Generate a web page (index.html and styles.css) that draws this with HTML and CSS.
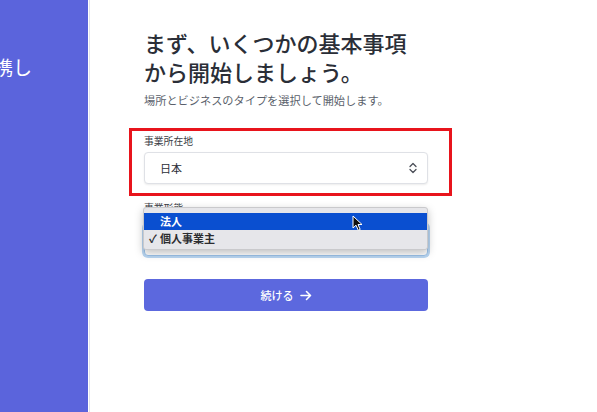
FILE: index.html
```html
<!DOCTYPE html>
<html lang="ja">
<head>
<meta charset="utf-8">
<link rel="stylesheet" href="styles.css">
</head>
<body>
<div class="page">
  <aside class="sidebar">
    <div class="side-text"><span>プラットフォームと連携し</span></div>
  </aside>
  <main class="main">
    <h1 class="title">まず、いくつかの基本事項<br>から開始しましょう。</h1>
    <p class="sub">場所とビジネスのタイプを選択して開始します。</p>

    <div class="field field-country">
      <div class="label">事業所在地</div>
      <div class="select">
        <span class="select-value">日本</span>
        <svg class="chev" width="10" height="14" viewBox="0 0 10 14"><path d="M2 5.5 L5 2.5 L8 5.5 M2 8.5 L5 11.5 L8 8.5" fill="none" stroke="#4b4f58" stroke-width="1.3" stroke-linecap="round" stroke-linejoin="round"/></svg>
      </div>
    </div>

    <div class="field field-type">
      <div class="label">事業形態</div>
      <div class="select select-focus"></div>
      <div class="menu">
        <div class="menu-row menu-row-active">法人</div>
        <div class="menu-row"><span class="check">✓</span>個人事業主</div>
      </div>
      <svg class="cursor" width="12" height="17" viewBox="0 0 12 17"><path d="M1 1 L1 13 L4 10.2 L6.3 15.3 L8.2 14.4 L6 9.5 L10 9.5 Z" fill="#111" stroke="#fff" stroke-width="1"/></svg>
    </div>

    <button class="btn">続ける <svg width="12" height="11" viewBox="0 0 12 11"><path d="M1 5.5 H10.5 M6.5 1.5 L10.5 5.5 L6.5 9.5" fill="none" stroke="#fff" stroke-width="1.6" stroke-linecap="round" stroke-linejoin="round"/></svg></button>
  </main>
</div>
</body>
</html>
```
FILE: styles.css
```css
* { box-sizing: border-box; }
html, body { margin: 0; padding: 0; background: #fff; }
body {
  font-family: "Noto Sans CJK JP", "Noto Sans", sans-serif;
  color: #2a2e37;
  width: 597px;
  height: 412px;
  overflow: hidden;
}
.page { display: flex; height: 412px; }
.sidebar {
  width: 89px;
  flex: 0 0 89px;
  background: #5b64dc;
  overflow: hidden;
  border-right: 1px solid #fff;
  box-shadow: 1px 0 0 #e2e4ea;
  padding-top: 54px;
}
.side-text {
  width: 32px;
  display: flex;
  justify-content: flex-end;
  white-space: nowrap;
  color: #fff;
  font-size: 19px;
  line-height: 26px;
}
.main {
  flex: 1;
  padding: 28px 0 0 55px;
}
.main > * { width: 284px; }
.title {
  margin: 0;
  font-size: 22px;
  line-height: 29px;
  font-weight: 500;
  color: #2a2e37;
}
.sub {
  margin: 6px 0 0;
  font-size: 11.2px;
  line-height: 16px;
  color: #5a5f6b;
  white-space: nowrap;
}
.field { position: relative; }
.field-country { margin-top: 26px; }
.field-country::after {
  content: "";
  position: absolute;
  top: -6px;
  left: -15px;
  right: -24px;
  bottom: -12px;
  border: 3px solid #e8141c;
}
.label {
  font-size: 9.8px;
  line-height: 14px;
  color: #3a3e46;
}
.select {
  margin-top: 4px;
  height: 32px;
  border: 1px solid #dfe1e6;
  border-radius: 4px;
  box-shadow: 0 1px 2px rgba(0,0,0,0.08);
  display: flex;
  align-items: center;
  justify-content: space-between;
  padding: 0 9px 0 15px;
  background: #fff;
}
.select-value { font-size: 11px; color: #2a2e37; }
.field-type { margin-top: 17px; }
.field-type .select { margin-top: 9px; }
.select-focus {
  border-color: #9cc3ea;
  box-shadow: 0 0 0 2px #b9d6f2;
}
.menu {
  position: absolute;
  top: 6px;
  left: -1px;
  width: 285px;
  padding: 5px 0 2px;
  background: #e6e6ea;
  border: 1px solid #c9c9cc;
  border-radius: 3px;
  box-shadow: 0 3px 8px rgba(0,0,0,0.25);
}
.menu-row {
  height: 17px;
  line-height: 17px;
  padding-left: 16px;
  font-size: 11px;
  font-weight: 700;
  color: #2c2c30;
  position: relative;
}
.menu-row-active { background: #0a4fd0; color: #fff; }
.check {
  position: absolute;
  left: 5px;
  font-size: 11px;
  font-weight: 700;
}
.cursor {
  position: absolute;
  left: 208px;
  top: 14px;
}
.btn {
  display: flex;
  align-items: center;
  justify-content: center;
  gap: 6px;
  margin-top: 23px;
  height: 32px;
  border: 0;
  border-radius: 4px;
  background: #5c68de;
  color: #fff;
  font-family: "Noto Sans CJK JP", "Noto Sans", sans-serif;
  font-size: 11px;
  font-weight: 500;
  padding: 0;
}
```
